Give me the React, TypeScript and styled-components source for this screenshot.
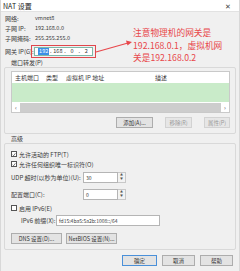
import React from "react";
import styled, { createGlobalStyle } from "styled-components";

const Global = createGlobalStyle`
  html, body { margin: 0; padding: 0; background: #f0f0f0; }
  * { box-sizing: border-box; }
`;

const font = `"Noto Sans CJK SC", "Liberation Sans", sans-serif`;

const Dialog = styled.div`
  position: relative;
  width: 240px;
  height: 271px;
  overflow: hidden;
  background: #f0f0f0;
  font-family: ${font};
  font-size: 6px;
  color: #3a3a3a;
  display: flex;
  flex-direction: column;
  border-left: 1px solid #d8d8d8;
  border-right: 1px solid #d8d8d8;
`;

const TitleBar = styled.div`
  height: 12px;
  background: #ffffff;
  display: flex;
  align-items: center;
  justify-content: space-between;
  padding: 0 8px 0 2px;
  font-size: 7px;
  color: #222;
  border-bottom: 1px solid #e2e2e2;
`;

const Close = styled.span`
  font-size: 7px;
  color: #444;
`;

const Body = styled.div`
  display: flex;
  flex-direction: column;
  padding: 1px 3px 0 2px;
`;

const InfoGrid = styled.div`
  display: grid;
  grid-template-columns: 30px auto;
  grid-auto-rows: 10px;
  align-items: center;
  padding-left: 2px;
`;

const Label = styled.span`
  white-space: nowrap;
`;

const Value = styled.span`
  font-size: 5.5px;
  white-space: nowrap;
`;

const GatewayRow = styled.div`
  display: flex;
  align-items: center;
  height: 14px;
  margin-top: 1px;
  padding-left: 2px;
  gap: 1px;
`;

const Highlight = styled.span`
  display: inline-flex;
  border: 1px solid #e0474c;
  padding: 1px 2px;
`;

const IpBox = styled.span`
  display: inline-flex;
  align-items: center;
  width: 59px;
  height: 9px;
  background: #fff;
  border: 1px solid #7fb8a8;
  padding-left: 3px;
  font-size: 5.5px;
`;

const Seg = styled.span<{ $sel?: boolean }>`
  display: inline-flex;
  justify-content: center;
  width: 12px;
  line-height: 7px;
  background: ${(p) => (p.$sel ? "#3b8fe6" : "transparent")};
  color: ${(p) => (p.$sel ? "#fff" : "#333")};
`;

const Dot = styled.span`
  width: 3px;
  text-align: center;
`;

const SectionLabel = styled.div<{ $indent?: number }>`
  height: 8px;
  line-height: 8px;
  padding-left: ${(p) => p.$indent ?? 8}px;
  margin-top: 1px;
`;

const Group = styled.div<{ $pad: string; $h: number }>`
  border: 1px solid #d9d9d9;
  border-radius: 2px;
  margin: 0 0 0 1px;
  padding: ${(p) => p.$pad};
  height: ${(p) => p.$h}px;
  display: flex;
  flex-direction: column;
`;

const Table = styled.div`
  height: 42px;
  border: 1px solid #c9c9c9;
  background: #fff;
  display: flex;
  flex-direction: column;
`;

const HeadRow = styled.div`
  height: 11px;
  display: grid;
  grid-template-columns: 31px 20px 89px auto;
  align-items: center;
  padding-left: 3px;
  background: #fff;
`;

const GreenArea = styled.div`
  flex: 1;
  background: #c9ebc9;
`;

const ScrollBar = styled.div`
  height: 10px;
  display: flex;
  align-items: center;
  background: #fff;
`;

const ScrollArrow = styled.span`
  width: 8px;
  text-align: center;
  font-size: 6px;
  color: #555;
`;

const ScrollTrack = styled.div`
  flex: 1;
  height: 9px;
  background: #cdcdcd;
`;

const ButtonRow = styled.div<{ $justify?: string; $gap: number }>`
  display: flex;
  justify-content: ${(p) => p.$justify ?? "flex-end"};
  gap: ${(p) => p.$gap}px;
`;

const Btn = styled.span<{ $w: number; $disabled?: boolean; $primary?: boolean }>`
  width: ${(p) => p.$w}px;
  height: 11px;
  display: inline-flex;
  align-items: center;
  justify-content: center;
  white-space: nowrap;
  font-size: 5.5px;
  background: ${(p) => (p.$disabled ? "#e6e6e6" : "#e3e3e3")};
  color: ${(p) => (p.$disabled ? "#9a9a9a" : "#333")};
  border: 1px solid ${(p) => (p.$primary ? "#4a90d9" : p.$disabled ? "#d2d2d2" : "#adadad")};
`;

const CheckRow = styled.div`
  height: 10px;
  display: flex;
  align-items: center;
  gap: 2px;
`;

const Box = styled.span`
  width: 6px;
  height: 6px;
  border: 1px solid #555;
  background: #fff;
  display: inline-flex;
  align-items: center;
  justify-content: center;
`;

const FieldRow = styled.div<{ $h: number; $indent?: number }>`
  height: ${(p) => p.$h}px;
  display: flex;
  align-items: center;
  padding-left: ${(p) => p.$indent ?? 0}px;
`;

const FieldLabel = styled.span<{ $w: number }>`
  width: ${(p) => p.$w}px;
  white-space: nowrap;
`;

const Input = styled.span<{ $w: number }>`
  width: ${(p) => p.$w}px;
  height: 11px;
  background: #fff;
  border: 1px solid #b5b5b5;
  font-size: 5px;
  display: inline-flex;
  align-items: flex-start;
  padding: 1px 2px;
  white-space: nowrap;
`;

const Spinner = styled.span`
  width: 8px;
  height: 11px;
  display: inline-flex;
  flex-direction: column;
  border: 1px solid #c8c8c8;
  border-left: none;
  background: #f3f3f3;
`;

const SpinHalf = styled.span`
  flex: 1;
  display: flex;
  align-items: center;
  justify-content: center;
  font-size: 3px;
  color: #555;
  line-height: 1;
`;

const Annotation = styled.div`
  position: absolute;
  left: 132px;
  top: 27px;
  display: flex;
  flex-direction: column;
  font-family: ${font};
  font-size: 8.7px;
  color: #e8474b;
  white-space: nowrap;
  pointer-events: none;
`;

const AnnLine = styled.span`
  height: 12.6px;
  line-height: 12.6px;
`;

const Arrow = styled.svg`
  position: absolute;
  left: 94px;
  top: 36px;
`;

const Check = () => (
  <svg width="5" height="5" viewBox="0 0 10 10">
    <path d="M1.5 5.5 L4 8 L8.5 2" stroke="#333" strokeWidth="1.6" fill="none" />
  </svg>
);

const Spin = () => (
  <Spinner>
    <SpinHalf>▲</SpinHalf>
    <SpinHalf>▼</SpinHalf>
  </Spinner>
);

export default function App() {
  return (
    <>
      <Global />
      <Dialog>
        <TitleBar>
          <span>NAT 设置</span>
          <Close>✕</Close>
        </TitleBar>
        <Body>
          <InfoGrid>
            <Label>网络:</Label>
            <Value>vmnet8</Value>
            <Label>子网 IP:</Label>
            <Value>192.168.0.0</Value>
            <Label>子网掩码:</Label>
            <Value>255.255.255.0</Value>
          </InfoGrid>
          <GatewayRow>
            <FieldLabel $w={25}>网关 IP(G):</FieldLabel>
            <Highlight>
              <IpBox>
                <Seg $sel>192</Seg>
                <Dot>.</Dot>
                <Seg>168</Seg>
                <Dot>.</Dot>
                <Seg>0</Seg>
                <Dot>.</Dot>
                <Seg>2</Seg>
              </IpBox>
            </Highlight>
          </GatewayRow>
          <SectionLabel>端口转发(P)</SectionLabel>
          <Group $pad="3px 5px 0 6px" $h={67}>
            <Table>
              <HeadRow>
                <span>主机端口</span>
                <span>类型</span>
                <span>虚拟机 IP 地址</span>
                <span>描述</span>
              </HeadRow>
              <GreenArea />
              <ScrollBar>
                <ScrollArrow>‹</ScrollArrow>
                <ScrollTrack />
                <ScrollArrow>›</ScrollArrow>
              </ScrollBar>
            </Table>
            <ButtonRow $gap={12} style={{ marginTop: 4 }}>
              <Btn $w={37}>添加(A)...</Btn>
              <Btn $w={27} $disabled>移除(R)</Btn>
              <Btn $w={26} $disabled>属性(P)</Btn>
            </ButtonRow>
          </Group>
          <SectionLabel>高级</SectionLabel>
          <Group $pad="5px 4px 0 6px" $h={107}>
            <CheckRow>
              <Box><Check /></Box>
              <span>允许活动的 FTP(T)</span>
            </CheckRow>
            <CheckRow>
              <Box><Check /></Box>
              <span>允许任何组织唯一标识符(O)</span>
            </CheckRow>
            <FieldRow $h={17}>
              <FieldLabel $w={72}>UDP 超时(以秒为单位)(U):</FieldLabel>
              <Input $w={35}>30</Input>
              <Spin />
            </FieldRow>
            <FieldRow $h={17}>
              <FieldLabel $w={72}>配置端口(C):</FieldLabel>
              <Input $w={35}>0</Input>
              <Spin />
            </FieldRow>
            <CheckRow>
              <Box />
              <span>启用 IPv6(E)</span>
            </CheckRow>
            <FieldRow $h={14} $indent={10}>
              <FieldLabel $w={35}>IPv6 前缀(X):</FieldLabel>
              <Input $w={104}>fd15:4ba5:5a2b:1008::/64</Input>
            </FieldRow>
            <ButtonRow $justify="flex-start" $gap={4} style={{ marginTop: 6 }}>
              <Btn $w={51}>DNS 设置(D)...</Btn>
              <Btn $w={51}>NetBIOS 设置(N)...</Btn>
            </ButtonRow>
          </Group>
          <ButtonRow $gap={5} style={{ marginTop: 5, paddingRight: 3 }}>
            <Btn $w={35} $primary>确定</Btn>
            <Btn $w={33}>取消</Btn>
            <Btn $w={33}>帮助</Btn>
          </ButtonRow>
        </Body>
        <Arrow width="40" height="20" viewBox="0 0 40 20">
          <line x1="1" y1="16" x2="33" y2="7" stroke="#e8474b" strokeWidth="1.2" />
          <polygon points="37,6 31,4.5 32.5,9.5" fill="#e8474b" />
        </Arrow>
        <Annotation>
          <AnnLine>注意物理机的网关是</AnnLine>
          <AnnLine>192.168.0.1，虚拟机网</AnnLine>
          <AnnLine>关是192.168.0.2</AnnLine>
        </Annotation>
      </Dialog>
    </>
  );
}
